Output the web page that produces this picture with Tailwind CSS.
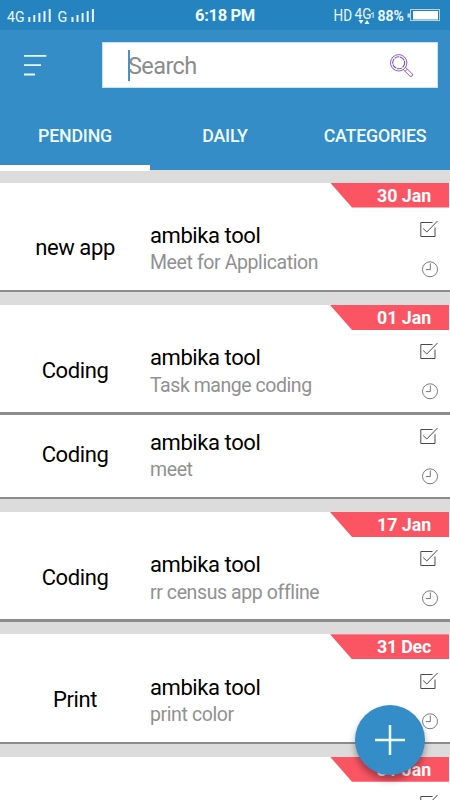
<!DOCTYPE html>
<html lang="en">
<head>
<meta charset="utf-8">
<title>Tasks</title>
<script src="https://cdn.jsdelivr.net/npm/@tailwindcss/browser@4"></script>
</head>
<body class="relative h-[800px] w-[450px] overflow-hidden bg-[#dcdcdc] font-[Roboto,sans-serif]">
<svg class="hidden">
  <symbol id="check" viewBox="0 0 18 18"><path d="M12.5 2.5H.8V16.5H15V7.5M3.2 8.5L6.8 12L17.5 1" fill="none" stroke="#4a4a4a" stroke-width="1"/></symbol>
  <symbol id="clock" viewBox="0 0 18 18"><circle cx="9" cy="9.3" r="7.5" fill="none" stroke="#666" stroke-width=".85"/><path d="M9.3 3.5V9.6H4.8" fill="none" stroke="#666" stroke-width=".9"/></symbol>
</svg>
<header class="h-[170px] bg-[#348dc7] text-white">
  <div class="flex h-[30px] items-center bg-[#2583c0]">
    <svg class="h-[30px] w-[100px]" viewBox="0 0 100 30" fill="#e9f8ff">
      <text x="7" y="22" font-size="14.5" font-family="Roboto" textLength="17.5" lengthAdjust="spacingAndGlyphs">4G</text>
      <path d="M28.3 17h2v5h-2zM33.3 15h2v7h-2zM38.4 13h2v9h-2zM43.5 11h2v11h-2zM48.7 9h2v13h-2z"/>
      <text x="57.5" y="22" font-size="14.5" font-family="Roboto">G</text>
      <path d="M71.5 17h2v5h-2zM76.5 15h2v7h-2zM81.6 13h2v9h-2zM86.7 11h2v11h-2zM91.9 9h2v13h-2z"/>
    </svg>
    <div class="w-[250px] pt-px text-center text-[16.5px] font-bold leading-5 tracking-[-0.35px] text-[#effaff]">6:18 PM</div>
    <svg class="h-[30px] w-[120px] -ml-5" viewBox="330 0 120 30" fill="#e9f8ff">
      <text x="333.5" y="21" font-size="16.5" font-family="Roboto" textLength="18.5" lengthAdjust="spacingAndGlyphs">HD</text>
      <text x="354.5" y="18.5" font-size="14.5" font-family="Roboto" textLength="17" lengthAdjust="spacingAndGlyphs">4G</text>
      <path d="M358.5 20h5l-2.5 4zM364.5 24h5l-2.5-4zM372.6 12h1v6h-1zM371 13.3l2-1.3v1.2l-2 1z"/>
      <text x="377.5" y="21" font-size="14" font-weight="700" font-family="Roboto" textLength="26.5" lengthAdjust="spacingAndGlyphs">88%</text>
      <path d="M407.5 13.5h2.5v4h-2.5z" opacity=".8"/>
      <rect x="410.5" y="9.5" width="29" height="11" fill="none" stroke="#b8d3d8"/>
      <path d="M413 11h25v8.5h-25z" fill="#fff"/>
    </svg>
  </div>
  <div class="flex h-[71px] pt-3">
    <svg class="ml-[23px] mt-3 h-6 w-6" viewBox="0 0 24 24" stroke="#e5faff" stroke-width="1.8"><path d="M1 1.9H23.3M1 11.2H18M1 20.5H12"/></svg>
    <div class="ml-[55px] flex h-[46px] w-[336px] items-center border border-[#bfe6f9] bg-white">
      <div class="ml-[25px] h-[31px] w-0.5 bg-[#4b91c1]"></div>
      <span class="ml-[-2px] pt-px text-[23.5px] leading-7 tracking-[-0.6px] text-[#8c8c8c]">Search</span>
      <svg class="ml-auto mr-[23px] h-[26px] w-[26px]" viewBox="0 0 26 26" fill="none" stroke="#7a4bbd" stroke-width=".9"><circle cx="10.7" cy="10.8" r="8.2"/><circle cx="10.7" cy="10.8" r="6" stroke-width="1.1" stroke-dasharray="5 .8"/><path d="M15.5 17.8L22 24.2Q23 25 24 24T24.3 22L17.8 15.5M17 19.2L19 17.2"/></svg>
    </div>
  </div>
  <nav class="grid h-[69px] grid-cols-3 text-center text-[17.8px] font-medium leading-[70px] tracking-[-0.2px] text-[#effcff]">
    <div class="border-b-6 border-white"><span class="block h-[63px]">PENDING</span></div>
    <div>DAILY</div>
    <div>CATEGORIES</div>
  </nav>
</header>
<main>
  <section class="mt-[12.5px] bg-white">
    <div class="flex h-[25px] justify-end pr-px"><div class="w-[119px] bg-[#fb5564] pl-[47px] text-[17.8px] font-bold leading-[26px] text-white [clip-path:polygon(0_0,100%_0,100%_100%,22px_100%)]">30 Jan</div></div>
    <div class="flex h-[84.9px] flex-col"><div class="flex flex-1">
      <div class="w-[150px] pt-[26px] text-center text-[22px] leading-7 tracking-[-0.4px]">new app</div>
      <div class="flex-1 pt-[14px]"><div class="text-[22px] leading-7 tracking-[-0.42px]">ambika tool</div><div class="text-[19.5px] leading-[26px] tracking-[-0.4px] text-[#919191]">Meet for Application</div></div>
      <div class="w-[30px] pt-3"><svg class="h-[18px] w-[18px]"><use href="#check"/></svg><svg class="ml-px mt-[22px] h-[18px] w-[18px]"><use href="#clock"/></svg></div>
    </div><div class="h-[2.5px] bg-[#8c8c8c]"></div></div>
  </section>
  <section class="mt-[12.5px] bg-white">
    <div class="flex h-[25px] justify-end pr-px"><div class="w-[119px] bg-[#fb5564] pl-[47px] text-[17.8px] font-bold leading-[26px] text-white [clip-path:polygon(0_0,100%_0,100%_100%,22px_100%)]">01 Jan</div></div>
    <div class="flex h-[84.9px] flex-col"><div class="flex flex-1">
      <div class="w-[150px] pt-[27px] text-center text-[22px] leading-7 tracking-[-0.4px]">Coding</div>
      <div class="flex-1 pt-[14px]"><div class="text-[22px] leading-7 tracking-[-0.42px]">ambika tool</div><div class="text-[19.5px] leading-[27px] tracking-[-0.45px] text-[#919191]">Task mange coding</div></div>
      <div class="w-[30px] pt-3"><svg class="h-[18px] w-[18px]"><use href="#check"/></svg><svg class="ml-px mt-[22px] h-[18px] w-[18px]"><use href="#clock"/></svg></div>
    </div><div class="h-[2.5px] bg-[#8c8c8c]"></div></div>
    <div class="flex h-[84.6px] flex-col"><div class="flex flex-1">
      <div class="w-[150px] pt-[26px] text-center text-[22px] leading-7 tracking-[-0.4px]">Coding</div>
      <div class="flex-1 pt-[14px]"><div class="text-[22px] leading-7 tracking-[-0.42px]">ambika tool</div><div class="text-[19.5px] leading-[26px] tracking-[-0.4px] text-[#919191]">meet</div></div>
      <div class="w-[30px] pt-3"><svg class="h-[18px] w-[18px]"><use href="#check"/></svg><svg class="ml-px mt-[22px] h-[18px] w-[18px]"><use href="#clock"/></svg></div>
    </div><div class="h-[2.5px] bg-[#8c8c8c]"></div></div>
  </section>
  <section class="mt-[12.5px] bg-white">
    <div class="flex h-[25px] justify-end pr-px"><div class="w-[119px] bg-[#fb5564] pl-[47px] text-[17.8px] font-bold leading-[26px] text-white [clip-path:polygon(0_0,100%_0,100%_100%,22px_100%)]">17 Jan</div></div>
    <div class="flex h-[84.9px] flex-col"><div class="flex flex-1">
      <div class="w-[150px] pt-[27px] text-center text-[22px] leading-7 tracking-[-0.4px]">Coding</div>
      <div class="flex-1 pt-[14px]"><div class="text-[22px] leading-7 tracking-[-0.42px]">ambika tool</div><div class="text-[19.5px] leading-[27px] tracking-[-0.4px] text-[#919191]">rr census app offline</div></div>
      <div class="w-[30px] pt-3"><svg class="h-[18px] w-[18px]"><use href="#check"/></svg><svg class="ml-px mt-[22px] h-[18px] w-[18px]"><use href="#clock"/></svg></div>
    </div><div class="h-[2.5px] bg-[#8c8c8c]"></div></div>
  </section>
  <section class="mt-[12.5px] bg-white">
    <div class="flex h-[25px] justify-end pr-px"><div class="w-[119px] bg-[#fb5564] pl-[47px] text-[17.8px] font-bold leading-[26px] tracking-[-0.2px] text-white [clip-path:polygon(0_0,100%_0,100%_100%,22px_100%)]">31 Dec</div></div>
    <div class="flex h-[84.9px] flex-col"><div class="flex flex-1">
      <div class="w-[150px] pt-[27px] text-center text-[22px] leading-7 tracking-[-0.4px]">Print</div>
      <div class="flex-1 pt-[15px]"><div class="text-[22px] leading-7 tracking-[-0.42px]">ambika tool</div><div class="text-[19.5px] leading-[26px] tracking-[-0.4px] text-[#919191]">print color</div></div>
      <div class="w-[30px] pt-[13px]"><svg class="h-[18px] w-[18px]"><use href="#check"/></svg><svg class="ml-px mt-[22px] h-[18px] w-[18px]"><use href="#clock"/></svg></div>
    </div><div class="h-[2.5px] bg-[#8c8c8c]"></div></div>
  </section>
  <section class="mt-[12.5px] h-[43px] overflow-hidden bg-white">
    <div class="flex h-[25px] justify-end pr-px"><div class="w-[119px] bg-[#fb5564] pl-[47px] text-[17.8px] font-bold leading-[26px] text-white [clip-path:polygon(0_0,100%_0,100%_100%,22px_100%)]">31 Jan</div></div>
    <div class="flex h-[18px] justify-end overflow-hidden"><div class="w-[30px] pt-3"><svg class="h-[18px] w-[18px]"><use href="#check"/></svg></div></div>
  </section>
</main>
<button aria-label="Add task" class="absolute left-[355px] top-[705px] flex size-[70px] items-center justify-center rounded-full bg-[#348dc7] shadow-[0_5px_7px_rgba(0,0,0,0.35)]">
  <svg class="size-[30px]" viewBox="0 0 30 30" stroke="#effcff" stroke-width="2.5"><path d="M0 15H30M15 0V30"/></svg>
</button>
</body>
</html>
